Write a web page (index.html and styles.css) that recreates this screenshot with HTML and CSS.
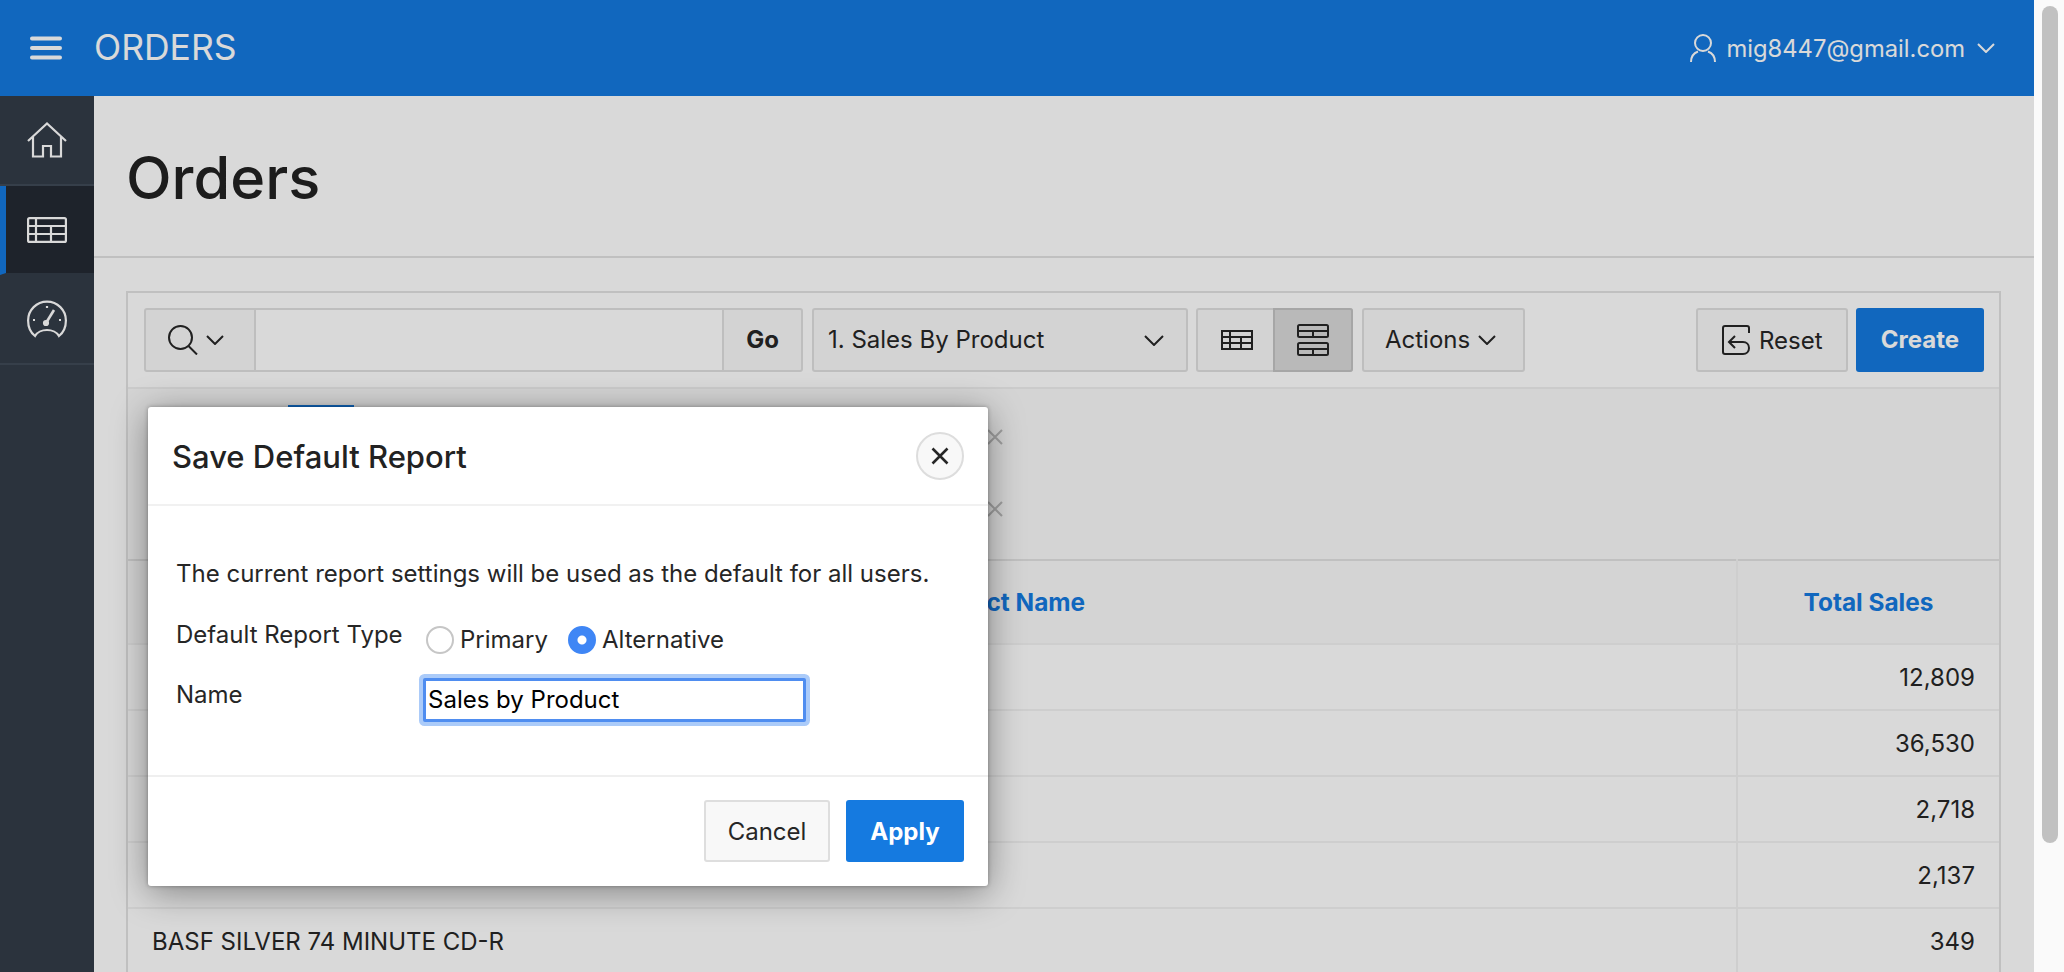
FILE: index.html
```html
<!DOCTYPE html>
<html lang="en">
<head>
    <meta charset="UTF-8">
    <meta name="viewport" content="width=device-width, initial-scale=1.0">
    <title>Orders</title>
    <link rel="stylesheet" href="styles.css">
</head>
<body>
    <div class="page">
        <header class="topbar">
            <svg class="menu-icon" width="32" height="24" viewBox="0 0 32 24"><path d="M2 2.500h28M2 12h28M2 21.500h28" stroke="currentColor" stroke-width="4" stroke-linecap="round" fill="none"/></svg>
            <div class="app-name">ORDERS</div>
            <div class="user-menu">
                <svg class="user-icon" width="26" height="28" viewBox="0 0 26 28" fill="none" stroke="currentColor" stroke-width="2"><circle cx="13" cy="9" r="8"/><path d="M1 28c0-6 3-9 7-10.500M25 28c0-6-3-9-7-10.500"/></svg>
                <span>mig8447@gmail.com</span>
                <svg class="chev chev-user" width="18" height="10" viewBox="0 0 18 10" fill="none" stroke="currentColor" stroke-width="2"><path d="M1 1l8 8 8-8"/></svg>
            </div>
        </header>
        <div class="main">
            <nav class="sidenav">
                <a class="nav-item">
                    <svg width="40" height="36" viewBox="0 0 40 36" fill="none" stroke="currentColor" stroke-width="2.200"><path d="M1 19L20 1.500 39 19M6 15v19.500h10V24h8v10.500h10V15"/></svg>
                </a>
                <a class="nav-item active">
                    <svg width="40" height="26" viewBox="0 0 40 26" fill="none" stroke="currentColor" stroke-width="2.200"><rect x="1.100" y="1.100" width="37.800" height="23.800" rx="1.500"/><path d="M1 9h38M1 17h38M9 1v24M24 9v16"/></svg>
                </a>
                <a class="nav-item">
                    <svg width="40" height="38" viewBox="0 0 40 38" fill="none" stroke="currentColor" stroke-width="2.200"><path d="M8 36C3.500 32.500 1.100 27 1.100 20.500A18.900 18.900 0 0 1 38.900 20.500C38.900 27 36.500 32.500 32 36c-2-3.500-7-6-12-6s-10 2.500-12 6z"/><path d="M19 23L27 10" stroke-width="2.600"/><circle cx="19" cy="23" r="2" fill="currentColor"/><path d="M6 20h2M32 20h2M20 6v2"/></svg>
                </a>
            </nav>
            <div class="content">
                <div class="title-band">
                    <h1>Orders</h1>
                </div>
                <section class="report">
                    <div class="toolbar">
                        <div class="search-group">
                            <div class="search-col">
                                <svg width="30" height="30" viewBox="0 0 30 30" fill="none" stroke="currentColor" stroke-width="2"><circle cx="12.500" cy="12.500" r="11.500"/><path d="M20.500 21l8.500 8.500"/></svg>
                                <svg class="chev" width="18" height="10" viewBox="0 0 18 10" fill="none" stroke="currentColor" stroke-width="2"><path d="M1 1l8 8 8-8"/></svg>
                            </div>
                            <div class="search-input"></div>
                            <div class="go-btn">Go</div>
                        </div>
                        <div class="report-select">
                            <span>1. Sales By Product</span>
                            <svg class="chev" width="20" height="11" viewBox="0 0 20 11" fill="none" stroke="currentColor" stroke-width="2"><path d="M1 1l9 9 9-9"/></svg>
                        </div>
                        <div class="view-group">
                            <div class="view-btn">
                                <svg width="32" height="20" viewBox="0 0 32 20" fill="none" stroke="currentColor" stroke-width="2"><rect x="1" y="1" width="30" height="18"/><path d="M1 7h30M1 13h30M9 1v18M20 7v12"/></svg>
                            </div>
                            <div class="view-btn selected">
                                <svg width="32" height="32" viewBox="0 0 32 32" fill="none" stroke="currentColor" stroke-width="2"><rect x="1" y="1" width="30" height="12" rx="1.500"/><rect x="1" y="19" width="30" height="12" rx="1.500"/><path d="M1 7h30M16 7v6M1 25h30M16 25v6"/></svg>
                            </div>
                        </div>
                        <div class="actions-btn">
                            <span>Actions</span>
                            <svg class="chev" width="18" height="10" viewBox="0 0 18 10" fill="none" stroke="currentColor" stroke-width="2"><path d="M1 1l8 8 8-8"/></svg>
                        </div>
                        <div class="toolbar-right">
                            <div class="reset-btn">
                                <svg width="28" height="30" viewBox="0 0 28 30" fill="none" stroke="currentColor" stroke-width="2"><path d="M27 8V3a2 2 0 0 0-2-2H3a2 2 0 0 0-2 2v24a2 2 0 0 0 2 2h18c3.500 0 6-2.500 6-6s-2.500-6-6-6H8"/><path d="M13 11l-6 6 6 6"/></svg>
                                <span>Reset</span>
                            </div>
                            <div class="create-btn">Create</div>
                        </div>
                    </div>
                    <div class="filters">
                        <div class="filter-row">
                            <span class="filter-tag"></span>
                            <svg class="filter-x first" width="16" height="16" viewBox="0 0 16 16" fill="none" stroke="currentColor" stroke-width="2"><path d="M1 1l14 14M15 1L1 15"/></svg>
                        </div>
                        <div class="filter-row">
                            <svg class="filter-x" width="16" height="16" viewBox="0 0 16 16" fill="none" stroke="currentColor" stroke-width="2"><path d="M1 1l14 14M15 1L1 15"/></svg>
                        </div>
                    </div>
                    <table class="report-table">
                        <thead>
                            <tr>
                                <th class="name-head">Product Name</th>
                                <th class="sales-col">Total Sales</th>
                            </tr>
                        </thead>
                        <tbody>
                            <tr><td></td><td class="sales-col">12,809</td></tr>
                            <tr><td></td><td class="sales-col">36,530</td></tr>
                            <tr><td></td><td class="sales-col">2,718</td></tr>
                            <tr><td></td><td class="sales-col">2,137</td></tr>
                            <tr><td>BASF SILVER 74 MINUTE CD-R</td><td class="sales-col">349</td></tr>
                        </tbody>
                    </table>
                </section>
            </div>
        </div>
        <div class="overlay"></div>
        <div class="dialog">
            <div class="dialog-head">
                <h2>Save Default Report</h2>
                <button class="close-btn" type="button">
                    <svg width="18" height="18" viewBox="0 0 18 18" fill="none" stroke="currentColor" stroke-width="2.600"><path d="M1.500 1.500l15 15M16.500 1.500l-15 15"/></svg>
                </button>
            </div>
            <div class="dialog-body">
                <p>The current report settings will be used as the default for all users.</p>
                <div class="form-row">
                    <label class="form-label">Default Report Type</label>
                    <div class="radios">
                        <label class="radio"><input type="radio" name="type"> Primary</label>
                        <label class="radio"><input type="radio" name="type" checked> Alternative</label>
                    </div>
                </div>
                <div class="form-row name-row">
                    <label class="form-label">Name</label>
                    <input class="name-input" type="text" value="Sales by Product">
                </div>
            </div>
            <div class="dialog-foot">
                <button class="cancel-btn" type="button">Cancel</button>
                <button class="apply-btn" type="button">Apply</button>
            </div>
        </div>
    </div>
    <div class="scroll-gutter"><div class="scroll-thumb"></div></div>
</body>
</html>
```

FILE: styles.css
```css
* {
    box-sizing: border-box;
}
html, body {
    margin: 0;
    height: 972px;
    overflow: hidden;
}
body {
    display: flex;
    font-family: Inter, "Noto Sans", sans-serif;
    font-size: 24px;
    color: #262626;
    background: #fafafa;
}
.page {
    position: relative;
    width: 2034px;
    height: 972px;
    overflow: hidden;
    background: #fff;
}
.scroll-gutter {
    flex: 1;
    padding: 6px 6px 0 8px;
}
.scroll-thumb {
    height: 837px;
    background: #c1c1c1;
    border-radius: 8px;
}

/* top bar */
.topbar {
    display: flex;
    align-items: center;
    height: 96px;
    padding: 0 39px 0 30px;
    background: #157ae0;
    color: #fff;
}
.app-name {
    margin-left: 32px;
    padding-bottom: 2px;
    font-size: 35.5px;
}
.user-menu {
    display: flex;
    align-items: center;
    margin-left: auto;
    font-size: 23.75px;
}
.user-icon {
    margin-right: 10px;
}
.chev-user {
    margin-left: 12px;
}
.chev {
    flex: none;
}

.main {
    display: flex;
    height: 876px;
}

/* side nav */
.sidenav {
    width: 94px;
    flex: none;
    background: #333c48;
    color: #fff;
}
.nav-item {
    display: flex;
    align-items: center;
    justify-content: center;
    height: 90px;
    border-bottom: 2px solid #404a57;
}
.nav-item.active {
    height: 89px;
    background: #242a33;
    border-left: 6px solid #157ae0;
    padding-right: 6px;
    border-bottom-color: #333c48;
}

/* page content */
.content {
    flex: 1;
    min-width: 0;
}
.title-band {
    height: 162px;
    padding: 0 32px;
    border-bottom: 2px solid #e2e2e2;
}
h1 {
    margin: 0;
    padding-top: 41px;
    font-size: 59.5px;
    font-weight: 500;
    line-height: 80px;
    color: #222;
}
.report {
    margin: 33px 33px 0 32px;
    border: 2px solid #e2e2e2;
    border-bottom: 0;
}
.toolbar {
    display: flex;
    align-items: center;
    height: 96px;
    padding: 0 15px 0 16px;
    border-bottom: 2px solid #efefef;
}
.search-group, .report-select, .view-group, .actions-btn, .reset-btn {
    display: flex;
    align-items: stretch;
    height: 64px;
    border: 2px solid #e0e0e0;
    border-radius: 3px;
    background: #f8f8f8;
}
.report-select span, .actions-btn span {
    padding-bottom: 2px;
}
.search-group {
    width: 659px;
}
.search-col {
    display: flex;
    align-items: center;
    gap: 8px;
    width: 110px;
    padding-left: 22px;
    border-right: 2px solid #e0e0e0;
}
.search-input {
    flex: 1;
    background: #fff;
}
.go-btn {
    display: flex;
    align-items: center;
    justify-content: center;
    width: 79px;
    padding-bottom: 2px;
    border-left: 2px solid #e0e0e0;
    font-weight: 700;
}
.report-select {
    align-items: center;
    justify-content: space-between;
    width: 376px;
    margin-left: 9px;
    padding: 0 22px 0 14px;
}
.view-group {
    width: 157px;
    margin-left: 8px;
}
.view-btn {
    display: flex;
    align-items: center;
    justify-content: center;
    width: 77px;
}
.view-btn.selected {
    flex: 1;
    margin: -2px;
    background: #dadada;
    border: 2px solid #c4c4c4;
    border-radius: 0 3px 3px 0;
}
.actions-btn {
    align-items: center;
    gap: 8px;
    width: 163px;
    margin-left: 9px;
    padding-left: 21px;
}
.toolbar-right {
    display: flex;
    align-items: center;
    gap: 8px;
    margin-left: auto;
}
.reset-btn {
    align-items: center;
    gap: 9px;
    width: 152px;
    padding-left: 24px;
}
.create-btn {
    display: flex;
    align-items: center;
    justify-content: center;
    width: 128px;
    height: 64px;
    padding-bottom: 1px;
    border-radius: 3px;
    background: #157ae0;
    color: #fff;
    font-weight: 700;
}

/* filter rows, mostly under the dialog */
.filters {
    height: 170px;
    padding-top: 12px;
    background: #f9f9f9;
}
.filter-row {
    display: flex;
    align-items: center;
    height: 72px;
    padding-left: 859px;
}
.filter-row:first-child {
    padding-left: 160px;
}
.filter-tag {
    align-self: flex-start;
    width: 66px;
    height: 30px;
    margin-top: 4px;
    background: #157ae0;
}
.filter-x {
    color: #bcbcbc;
}
.filter-x.first {
    margin-left: 633px;
}

/* report table */
.report-table {
    width: 100%;
    border-collapse: collapse;
    table-layout: fixed;
    border-top: 2px solid #e2e2e2;
}
.report-table th {
    height: 84px;
    padding-bottom: 1px;
    background: #f9f9f9;
    color: #157ae0;
    font-size: 24.4px;
    font-weight: 700;
    border-bottom: 2px solid #f2f2f2;
}
.report-table th.name-head {
    text-align: center;
    padding-left: 138px;
}
.report-table td {
    height: 66px;
    padding: 0 24px;
    border-bottom: 2px solid #f2f2f2;
}
.report-table .sales-col {
    width: 262px;
    border-left: 2px solid #f2f2f2;
}
.report-table td.sales-col {
    text-align: right;
}

.overlay {
    position: absolute;
    inset: 0;
    background: rgba(0, 0, 0, 0.15);
}

/* dialog */
.dialog {
    position: absolute;
    left: 148px;
    top: 407px;
    width: 840px;
    height: 479px;
    display: flex;
    flex-direction: column;
    background: #fff;
    border-radius: 3px;
    box-shadow: 0 6px 36px rgba(0, 0, 0, 0.4), 0 0 4px rgba(0, 0, 0, 0.3);
}
.dialog-head {
    display: flex;
    align-items: center;
    justify-content: space-between;
    height: 99px;
    padding: 0 24px 0 24px;
    border-bottom: 2px solid #f1f1f1;
}
h2 {
    margin: 0;
    padding-top: 1px;
    font-size: 31px;
    font-weight: 500;
    color: #222;
}
.close-btn {
    display: flex;
    align-items: center;
    justify-content: center;
    width: 48px;
    height: 48px;
    padding: 0;
    border: 2px solid #ddd;
    border-radius: 50%;
    background: #f8f8f8;
    color: #262626;
}
.dialog-body {
    flex: 1;
    padding: 0 28px;
}
.dialog-body p {
    margin: 52px 0 0;
    line-height: 32px;
}
.form-row {
    display: flex;
    margin-top: 29px;
}
.form-label {
    width: 244px;
    flex: none;
    line-height: 32px;
}
.radios {
    display: flex;
    gap: 20px;
    margin-left: 6px;
    padding-top: 6px;
}
.radio {
    display: flex;
    align-items: center;
    gap: 6px;
}
.radio input {
    appearance: none;
    width: 28px;
    height: 28px;
    margin: 0;
    border: 2px solid #c6c6c6;
    border-radius: 50%;
    background: #fff;
}
.radio input:checked {
    border-color: #3f86f5;
    background: radial-gradient(circle, #fff 0 4px, #3f86f5 5px);
}
.name-row {
    margin-top: 20px;
}
.name-row .form-label {
    padding-top: 5px;
}
.name-input {
    width: 383px;
    height: 44px;
    margin: 4px 3px 0 3px;
    padding: 0 2px 1px;
    border: 3px solid #4f8df0;
    border-radius: 2px;
    font: inherit;
    color: #000;
    outline: 0;
    box-shadow: 0 0 0 4px #abcbf9;
}
.dialog-foot {
    display: flex;
    justify-content: flex-end;
    gap: 16px;
    height: 111px;
    padding: 23px 24px 0;
    border-top: 2px solid #efefef;
}
.cancel-btn, .apply-btn {
    height: 62px;
    border-radius: 3px;
    font: inherit;
}
.cancel-btn {
    width: 126px;
    border: 2px solid #dedede;
    background: #f8f8f8;
    color: #262626;
}
.apply-btn {
    width: 118px;
    border: 0;
    background: #157ae0;
    color: #fff;
    font-weight: 700;
}
```
